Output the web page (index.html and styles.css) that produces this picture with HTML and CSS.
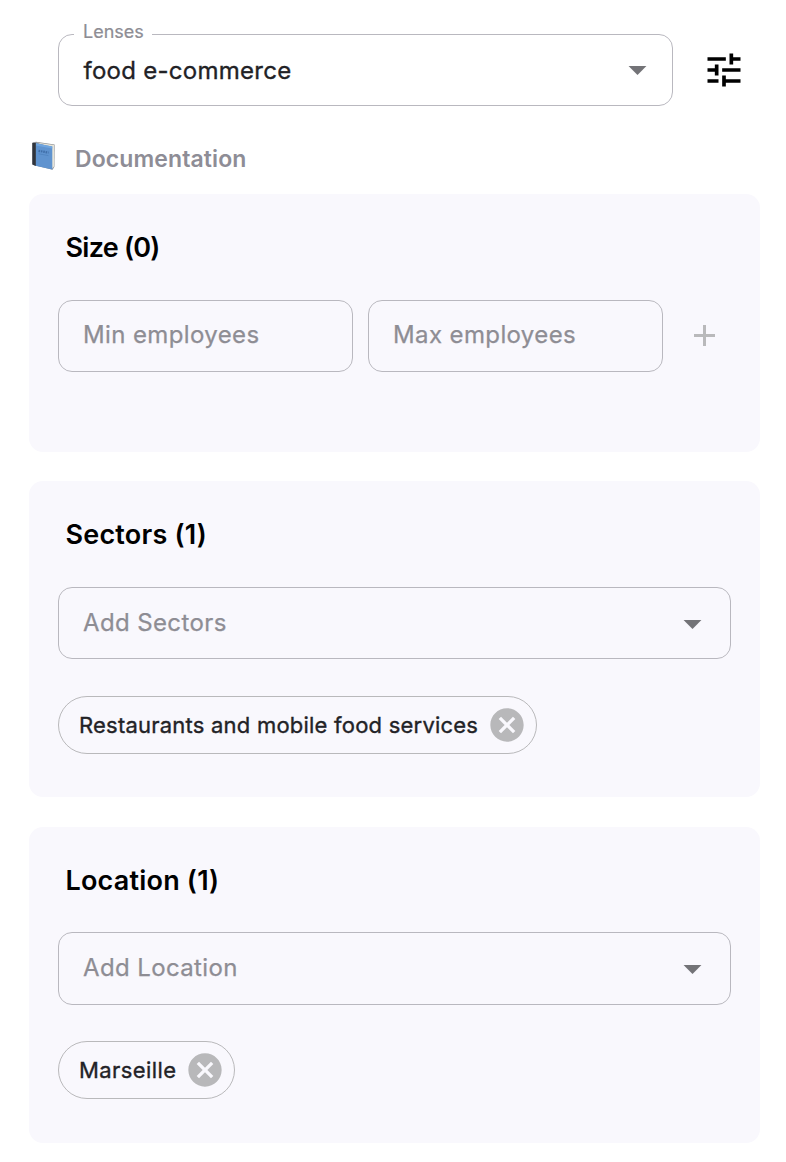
FILE: index.html
```html
<!DOCTYPE html>
<html lang="en">
<head>
<meta charset="utf-8">
<title>Lenses</title>
<link rel="stylesheet" href="styles.css">
</head>
<body>
<main class="panel">
  <div class="lens-row">
    <div class="field lens-field">
      <span class="field-label">Lenses</span>
      <span class="lens-value">food e-commerce</span>
      <svg class="arrow" viewBox="0 0 24 24"><path d="M7 10l5 5 5-5z"/></svg>
    </div>
    <svg class="tune" viewBox="0 0 24 24"><path d="M3 17v2h6v-2H3zM3 5v2h10V5H3zm10 16v-2h8v-2h-8v-2h-2v6h2zM7 9v2H3v2h4v2h2V9H7zm14 4v-2H11v2h10zm-6-4h2V7h4V5h-4V3h-2v6z"/></svg>
  </div>
  <div class="docs">
    <svg class="book" viewBox="0 0 26 30">
      <path fill="#8b8f94" d="M2 1.5 5 .8 23.6 3.4l-.2 22.4-1.8 3L3 24.2z"/>
      <path fill="#e7e4d8" d="M5 1.5 23 4v21.5l-1.8 2.3L19 6z"/>
      <path fill="#5f93cf" d="M4.5 2.2 21.3 5.6v23L4.5 24.8z"/>
      <path fill="#6fa5df" d="M5 2.2 21.3 5.4l-.1 2L5 4.5z"/>
      <path fill="#30343c" d="M1.2 1.8 4.8 2v22.9l-3.6-1.4z"/>
      <path stroke="#3f6ea8" stroke-width="2.2" stroke-dasharray="1.6 .8" fill="none" d="M7.5 9.8l10 1.8"/>
      <path stroke="#4c7fbc" stroke-width=".7" fill="none" d="M7.5 12.8l10 1.8"/>
    </svg>
    <span class="docs-text">Documentation</span>
  </div>
  <section class="card card-size">
    <h2 class="title title-size">Size (0)</h2>
    <div class="range">
      <div class="field"><span class="hint">Min employees</span></div>
      <div class="field"><span class="hint">Max employees</span></div>
      <svg class="plus" viewBox="0 0 21 21"><path d="M10.5 0v21M0 10.5h21"/></svg>
    </div>
  </section>
  <section class="card">
    <h2 class="title">Sectors (1)</h2>
    <div class="field field-sectors">
      <span class="hint">Add Sectors</span>
      <svg class="arrow" viewBox="0 0 24 24"><path d="M7 10l5 5 5-5z"/></svg>
    </div>
    <div class="chip chip-sector">
      <span class="chip-text">Restaurants and mobile food services</span>
      <svg class="remove" viewBox="0 0 24 24"><path d="M12 2C6.47 2 2 6.47 2 12s4.47 10 10 10 10-4.47 10-10S17.53 2 12 2zm5 13.59L15.59 17 12 13.41 8.41 17 7 15.59 10.59 12 7 8.41 8.41 7 12 10.59 15.59 7 17 8.41 13.41 12 17 15.59z"/></svg>
    </div>
  </section>
  <section class="card">
    <h2 class="title title-location">Location (1)</h2>
    <div class="field field-location">
      <span class="hint">Add Location</span>
      <svg class="arrow" viewBox="0 0 24 24"><path d="M7 10l5 5 5-5z"/></svg>
    </div>
    <div class="chip chip-location">
      <span class="chip-text">Marseille</span>
      <svg class="remove" viewBox="0 0 24 24"><path d="M12 2C6.47 2 2 6.47 2 12s4.47 10 10 10 10-4.47 10-10S17.53 2 12 2zm5 13.59L15.59 17 12 13.41 8.41 17 7 15.59 10.59 12 7 8.41 8.41 7 12 10.59 15.59 7 17 8.41 13.41 12 17 15.59z"/></svg>
    </div>
  </section>
</main>
</body>
</html>
```
FILE: styles.css
```css
* { box-sizing: border-box; }
body {
  margin: 0;
  background: #fff;
  font-family: Inter, "Liberation Sans", sans-serif;
  color: #222226;
}
svg { display: block; flex: none; }
.panel { padding: 34px 26px 0 29px; }
.lens-row {
  display: flex;
  align-items: center;
  gap: 29px;
  padding-left: 29px;
}
.field {
  position: relative;
  display: flex;
  align-items: center;
  justify-content: space-between;
  height: 72px;
  padding: 0 16px 3px 24px;
  border: 1px solid #b9b8bf;
  border-radius: 14px;
}
.lens-field { width: 615px; padding-right: 13px; padding-bottom: 0; }
.lens-field .arrow { margin-top: -1px; }
.field-label {
  position: absolute;
  left: 15px;
  top: -14px;
  width: 78px;
  padding-left: 9px;
  background: #fff;
  color: #8e8d94;
  font-size: 18px;
  line-height: 22px;
  -webkit-text-stroke: 0.2px;
}
.lens-value { margin-left: 0.5px; font-size: 24px; letter-spacing: 0.27px; -webkit-text-stroke: 0.35px; }
.arrow { width: 43px; height: 43px; fill: #737377; }
.card .arrow { margin-top: 3px; }
.tune { width: 44px; height: 44px; fill: #000; }
.docs {
  display: flex;
  align-items: center;
  height: 88px;
  padding: 13px 0 0 2px;
}
.book { width: 26px; height: 30px; margin-top: -1px; }
.docs-text {
  margin-left: 18px;
  margin-top: 4px;
  color: #8e8d96;
  font-size: 23px;
  font-weight: 600;
  letter-spacing: 0.1px;
}
.card {
  height: 316px;
  margin-bottom: 30px;
  padding: 35px 29px 0;
  border-radius: 14px;
  background: #f9f8fd;
}
.card-size { height: 258px; margin-bottom: 29px; }
.title {
  margin: 0 0 33px 7.5px;
  color: #000;
  font-size: 27px;
  line-height: 38px;
  font-weight: 600;
  letter-spacing: 0.2px;
  white-space: nowrap;
}
.title-size { letter-spacing: -0.75px; }
.title-location { margin-bottom: 32px; }
.range { display: flex; align-items: center; gap: 15px; }
.range .field { width: 295px; }
.plus { width: 21px; height: 21px; margin-left: 16px; margin-top: -1px; fill: none; stroke: #b9b9bb; stroke-width: 3; }
.hint {
  color: #8e8d94;
  font-size: 24px;
  letter-spacing: 0.38px;
  white-space: nowrap;
  -webkit-text-stroke: 0.25px;
}
.field-sectors .hint { padding-top: 2px; }
.chip {
  display: flex;
  align-items: center;
  justify-content: space-between;
  height: 58px;
  margin-top: 37px;
  padding: 0 9px 0 20px;
  border: 1px solid #b9b9bb;
  border-radius: 29px;
}
.field-location { height: 73px; }
.field-location + .chip { margin-top: 36px; }
.chip-sector { width: 479px; }
.chip-location { width: 177px; }
.chip-text { font-size: 22px; letter-spacing: 0.22px; white-space: nowrap; -webkit-text-stroke: 0.35px; }
.chip-location .chip-text { letter-spacing: 0.4px; }
.remove { width: 40px; height: 40px; fill: #b8b8ba; }
```
